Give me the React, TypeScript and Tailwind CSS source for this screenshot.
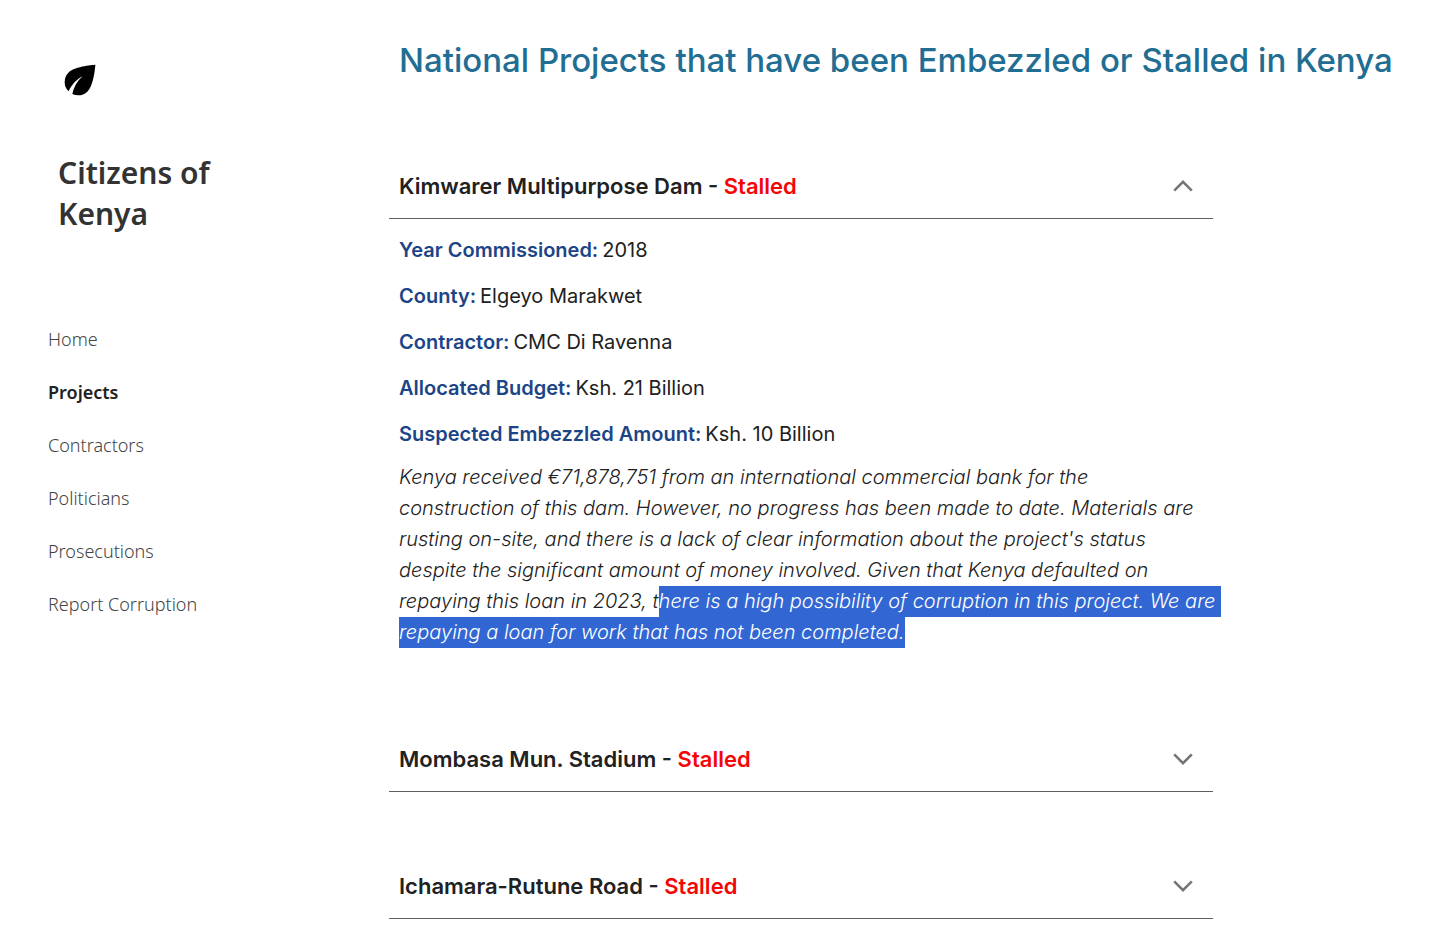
import { useState } from "react";
import type { ReactNode } from "react";
import { MdEco } from "react-icons/md";

const links = [
  "Home",
  "Projects",
  "Contractors",
  "Politicians",
  "Prosecutions",
  "Report Corruption",
];

const details = [
  { label: "Year Commissioned:", value: "2018" },
  { label: "County:", value: "Elgeyo Marakwet" },
  { label: "Contractor:", value: "CMC Di Ravenna" },
  { label: "Allocated Budget:", value: "Ksh. 21 Billion" },
  { label: "Suspected Embezzled Amount:", value: "Ksh. 10 Billion" },
];

const Chevron = ({ open }: { open: boolean }) => (
  <svg
    width="20"
    height="20"
    viewBox="0 0 20 20"
    fill="none"
    stroke="#757575"
    strokeWidth="2.6"
    className={open ? "shrink-0" : "shrink-0 rotate-180"}
  >
    <path d="M1.2 14.6 10 5.8l8.8 8.8" />
  </svg>
);

const Mark = ({ children }: { children: ReactNode }) => (
  <mark className="inline-block bg-[#3267d3] text-white">{children}</mark>
);

const Sidebar = () => (
  <aside className="w-[389px] shrink-0 pt-[57px] font-['Noto_Sans',sans-serif]">
    <a href="#" aria-label="Citizens of Kenya" className="block w-fit ml-[57px]">
      <MdEco size={46} className="text-black" />
    </a>
    <p className="mt-[49px] ml-[58px] w-[200px] text-[30px] leading-[41px] font-semibold text-[#333333]">
      Citizens of Kenya
    </p>
    <nav className="mt-[79px] ml-12">
      <ul>
        {links.map((link) => (
          <li key={link} className="h-[53px] flex items-center text-[18px]">
            <a
              href="#"
              className={
                link === "Projects"
                  ? "font-semibold text-[#212121]"
                  : "font-light text-[#444444]"
              }
            >
              {link}
            </a>
          </li>
        ))}
      </ul>
    </nav>
  </aside>
);

type ProjectProps = {
  name: string;
  defaultOpen?: boolean;
  children?: ReactNode;
};

const Project = ({ name, defaultOpen = false, children }: ProjectProps) => {
  const [open, setOpen] = useState(defaultOpen);

  return (
    <section>
      <h2>
        <button
          type="button"
          aria-expanded={open}
          onClick={() => setOpen(!open)}
          className="w-full h-[65px] pl-[10px] pr-5 flex items-center justify-between border-b border-[#5f5f5f] text-left text-[22px] font-semibold text-[#212121] cursor-pointer"
        >
          <span>
            {name} - <span className="text-[#f50505]">Stalled</span>
          </span>
          <Chevron open={open} />
        </button>
      </h2>
      {open && children}
    </section>
  );
};

export default function App() {
  return (
    <div className="min-h-screen flex bg-white font-['Inter',sans-serif] text-[#212121]">
      <Sidebar />
      <main className="flex-1 min-w-0 pt-10 pb-[29px]">
        <h1 className="pl-[10px] text-[33px] leading-10 font-medium text-[#226e93]">
          National Projects that have been Embezzled or Stalled in Kenya
        </h1>
        <div className="mt-[74px] max-w-[824px] flex flex-col gap-[62px]">
          <Project name="Kimwarer Multipurpose Dam" defaultOpen>
            <div className="pt-4 pb-[17px] pl-[10px] text-[20px] leading-[31px]">
              <dl className="flex flex-col gap-[15px]">
                {details.map((item) => (
                  <div key={item.label} className="flex gap-1">
                    <dt className="font-semibold text-[#1c4587]">
                      {item.label}
                    </dt>
                    <dd>{item.value}</dd>
                  </div>
                ))}
              </dl>
              <p className="mt-3 italic font-light whitespace-nowrap">
                Kenya received €71,878,751 from an international commercial bank
                for the
                <br />
                construction of this dam. However, no progress has been made to
                date. Materials are
                <br />
                rusting on-site, and there is a lack of clear information about
                the project's status
                <br />
                despite the significant amount of money involved. Given that
                Kenya defaulted on
                <br />
                repaying this loan in 2023, t
                <Mark>
                  here is a high possibility of corruption in this project. We
                  are&nbsp;
                </Mark>
                <br />
                <Mark>repaying a loan for work that has not been completed.</Mark>
              </p>
            </div>
          </Project>
          <Project name="Mombasa Mun. Stadium" />
          <Project name="Ichamara-Rutune Road" />
        </div>
      </main>
    </div>
  );
}
